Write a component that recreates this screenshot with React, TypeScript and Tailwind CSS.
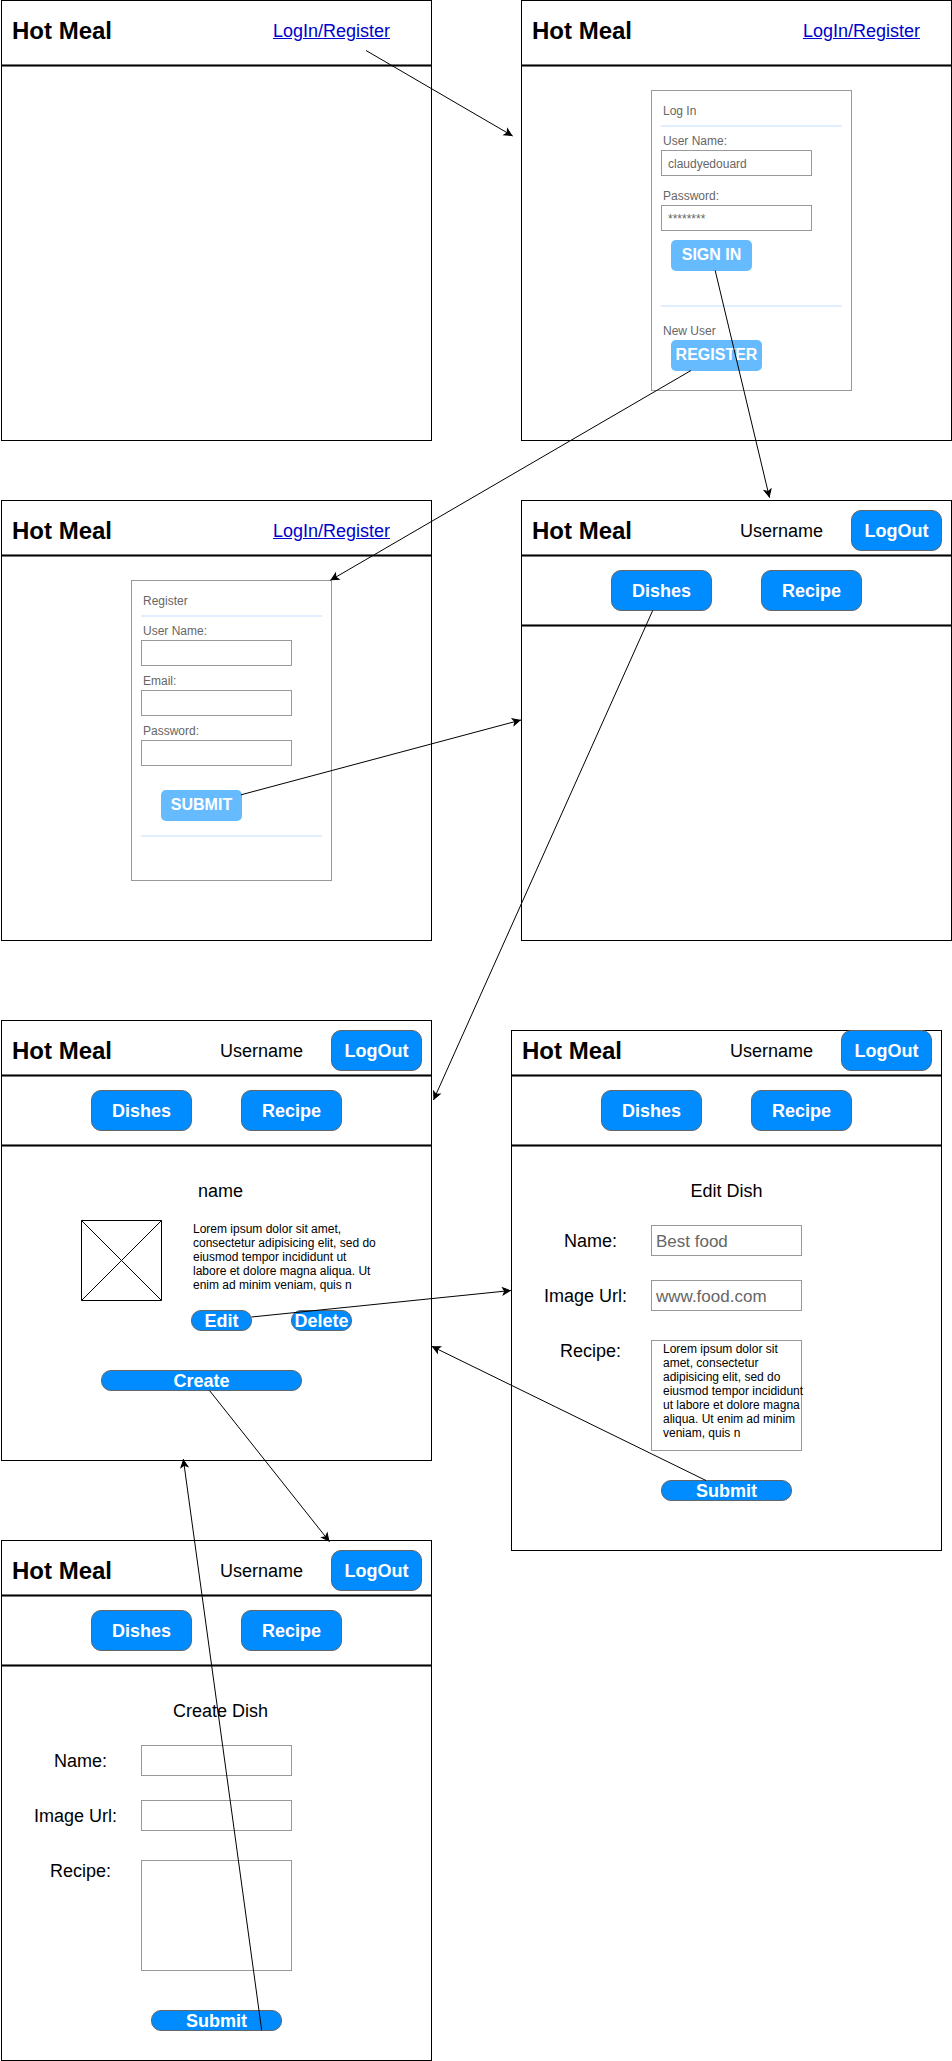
import type { ReactNode } from "react";

const LOREM =
  "Lorem ipsum dolor sit amet, consectetur adipisicing elit, sed do eiusmod tempor incididunt ut labore et dolore magna aliqua. Ut enim ad minim veniam, quis n";

function Divider() {
  return <div className="h-[3px] border-y border-[#777777] bg-black" />;
}

function Screen({ className, children }: { className: string; children?: ReactNode }) {
  return <section className={`w-[431px] border border-black bg-white ${className}`}>{children}</section>;
}

function Header({ className, children }: { className: string; children: ReactNode }) {
  return (
    <header className={`flex pl-2.5 ${className}`}>
      <h1 className="text-2xl leading-[41px] font-bold">Hot Meal</h1>
      {children}
    </header>
  );
}

function LoginLink() {
  return (
    <a href="#login" className="ml-auto pt-0.5 text-lg leading-[39px] text-[#0000cc] underline">
      LogIn/Register
    </a>
  );
}

function Button({ className, children }: { className: string; children: ReactNode }) {
  return (
    <button
      type="button"
      className={`flex items-center justify-center rounded-[10px] border border-[#666666] bg-[#008cff] text-lg leading-5 font-bold text-white ${className}`}
    >
      {children}
    </button>
  );
}

function MemberTop({ className }: { className: string }) {
  return (
    <>
      <Header className={`pr-[9px] pb-[3px] ${className}`}>
        <span className="mr-7 ml-auto pt-0.5 text-lg leading-[39px]">Username</span>
        <Button className="h-[41px] w-[91px]">LogOut</Button>
      </Header>
      <Divider />
      <nav className="flex justify-center gap-[49px] py-[13px]">
        <Button className="h-[41px] w-[101px]">Dishes</Button>
        <Button className="h-[41px] w-[101px]">Recipe</Button>
      </nav>
      <Divider />
    </>
  );
}

function FormCard({ title, className, children }: { title: string; className: string; children: ReactNode }) {
  return (
    <form className={`mt-[23px] ml-[129px] w-[201px] border border-[#999999] px-[9px] pt-[13px] text-xs leading-[14px] text-[#666666] ${className}`}>
      <h2 className="pl-0.5">{title}</h2>
      <Rule className="mt-[7px]" />
      {children}
    </form>
  );
}

function Rule({ className }: { className: string }) {
  return <div className={`h-0.5 bg-[#e0efff] ${className}`} />;
}

function CardField({ id, label, value, className }: { id: string; label: string; value?: string; className: string }) {
  return (
    <div className={`flex flex-col gap-0.5 ${className}`}>
      <label htmlFor={id} className="pl-0.5">
        {label}
      </label>
      <input id={id} type="text" defaultValue={value} className="h-[26px] w-[151px] border border-[#999999] px-1.5 pt-0.5" />
    </div>
  );
}

function CardButton({ className, children }: { className: string; children: ReactNode }) {
  return (
    <button
      type="button"
      className={`flex h-[31px] items-center justify-center rounded-[5px] bg-[#66bbff] pb-0.5 text-base leading-5 font-bold text-white ${className}`}
    >
      {children}
    </button>
  );
}

function DishRow({ id, label, labelClass, children }: { id: string; label: string; labelClass: string; children: ReactNode }) {
  return (
    <div className="flex">
      <label htmlFor={id} className={`w-[139px] pt-1.5 text-center text-lg leading-5 ${labelClass}`}>
        {label}
      </label>
      {children}
    </div>
  );
}

type DishFormProps = {
  prefix: string;
  title: string;
  titleClass: string;
  name?: string;
  url?: string;
  recipe?: string;
  submitClass: string;
};

function DishForm({ prefix, title, titleClass, name, url, recipe, submitClass }: DishFormProps) {
  const input = "h-[31px] w-[151px] border border-[#999999] px-1 pt-0.5 text-[17px] leading-5 text-[#666666]";
  return (
    <form className="pt-[34px]">
      <h2 className={`text-center text-lg leading-5 ${titleClass}`}>{title}</h2>
      <div className="mt-6 flex flex-col gap-6">
        <DishRow id={`${prefix}-name`} label="Name:" labelClass="pl-[18px]">
          <input id={`${prefix}-name`} type="text" defaultValue={name} className={input} />
        </DishRow>
        <DishRow id={`${prefix}-url`} label="Image Url:" labelClass="pl-2">
          <input id={`${prefix}-url`} type="text" defaultValue={url} className={input} />
        </DishRow>
      </div>
      <div className="mt-[29px] flex">
        <label htmlFor={`${prefix}-recipe`} className="w-[139px] pt-px pl-[18px] text-center text-lg leading-5">
          Recipe:
        </label>
        <div className="h-[111px] w-[151px] border border-[#999999] pt-px pl-[11px]">
          <textarea
            id={`${prefix}-recipe`}
            defaultValue={recipe}
            className="block h-[106px] w-[142px] resize-none overflow-hidden bg-transparent text-xs leading-[14px]"
          />
        </div>
      </div>
      <Button className={`ml-[149px] h-[21px] w-[131px] ${submitClass}`}>Submit</Button>
    </form>
  );
}

const ARROWS = [
  [366, 50.5, 512.7, 136],
  [715.2, 270.5, 769.5, 497.7],
  [691, 370.5, 330.3, 580.3],
  [241, 794.8, 521, 720],
  [652.7, 610.5, 433.5, 1100],
  [251.5, 1317, 511, 1290.5],
  [706, 1480.5, 431.7, 1346.3],
  [209.5, 1390.5, 329.5, 1541.7],
  [261.7, 2030.3, 183.3, 1459],
];

function Arrows() {
  return (
    <svg className="pointer-events-none absolute inset-0 h-full w-full" aria-hidden="true">
      <defs>
        <marker id="head" markerUnits="userSpaceOnUse" markerWidth="20" markerHeight="20" refX="1.1" refY="0" orient="auto" overflow="visible">
          <path d="M0 0L-7 -3.5L-5.25 0L-7 3.5Z" fill="#000" stroke="#000" />
        </marker>
      </defs>
      {ARROWS.map(([x1, y1, x2, y2]) => (
        <line key={`${x1}-${y1}`} x1={x1} y1={y1} x2={x2} y2={y2} stroke="#000" markerEnd="url(#head)" />
      ))}
    </svg>
  );
}

export default function App() {
  return (
    <main className="relative flex w-max gap-[89px] bg-white pl-px font-['Liberation_Sans',Arial,sans-serif] text-black">
      <div className="flex flex-col">
        <Screen className="min-h-[441px]">
          <Header className="pt-[9px] pr-[41px] pb-[13px]">
            <LoginLink />
          </Header>
          <Divider />
        </Screen>

        <Screen className="mt-[59px] min-h-[441px]">
          <Header className="pt-[9px] pr-[41px] pb-[3px]">
            <LoginLink />
          </Header>
          <Divider />
          <FormCard title="Register" className="pb-[43px]">
            <CardField id="reg-user" label="User Name:" className="mt-[7px]" />
            <CardField id="reg-email" label="Email:" className="mt-2" />
            <CardField id="reg-password" label="Password:" className="mt-2" />
            <CardButton className="mt-6 ml-5 w-[81px]">SUBMIT</CardButton>
            <Rule className="mt-3.5" />
          </FormCard>
        </Screen>

        <Screen className="mt-[79px] min-h-[441px]">
          <MemberTop className="pt-[9px]" />
          <h2 className="mt-[34px] pl-2 text-center text-lg leading-5">name</h2>
          <div className="mt-[19px] flex gap-[29px] pl-[79px]">
            <svg className="h-[81px] w-[81px]" viewBox="0 0 81 81" fill="none" stroke="#000">
              <path d="M0.5 0.5H80.5V80.5H0.5ZM0.5 0.5L80.5 80.5M80.5 0.5L0.5 80.5" />
            </svg>
            <div className="pt-0.5">
              <p className="w-[188px] pl-0.5 text-xs leading-[14px]">{LOREM}</p>
              <div className="mt-[18px] flex gap-[39px]">
                <Button className="h-[21px] w-[61px]">Edit</Button>
                <Button className="h-[21px] w-[61px]">Delete</Button>
              </div>
            </div>
          </div>
          <Button className="mt-[39px] ml-[99px] h-[21px] w-[201px]">Create</Button>
        </Screen>

        <Screen className="mt-[79px] min-h-[521px]">
          <MemberTop className="pt-[9px]" />
          <DishForm prefix="create" title="Create Dish" titleClass="pl-2" submitClass="mt-[39px]" />
        </Screen>
      </div>

      <div className="flex flex-col">
        <Screen className="min-h-[441px]">
          <Header className="pt-[9px] pr-[31px] pb-[13px]">
            <LoginLink />
          </Header>
          <Divider />
          <FormCard title="Log In" className="pb-[19px]">
            <CardField id="login-user" label="User Name:" value="claudyedouard" className="mt-[7px]" />
            <CardField id="login-password" label="Password:" value="********" className="mt-[13px]" />
            <CardButton className="mt-[9px] ml-2.5 w-[81px]">SIGN IN</CardButton>
            <Rule className="mt-[34px]" />
            <p className="mt-[17px] pl-0.5">New User</p>
            <CardButton className="mt-0.5 ml-2.5 w-[91px]">REGISTER</CardButton>
          </FormCard>
        </Screen>

        <Screen className="mt-[59px] min-h-[441px]">
          <MemberTop className="pt-[9px]" />
        </Screen>

        <Screen className="mt-[89px] -ml-2.5 min-h-[521px]">
          <MemberTop className="-mt-px" />
          <DishForm
            prefix="edit"
            title="Edit Dish"
            titleClass="px-0"
            name="Best food"
            url="www.food.com"
            recipe={LOREM}
            submitClass="mt-[29px]"
          />
        </Screen>
      </div>

      <Arrows />
    </main>
  );
}
